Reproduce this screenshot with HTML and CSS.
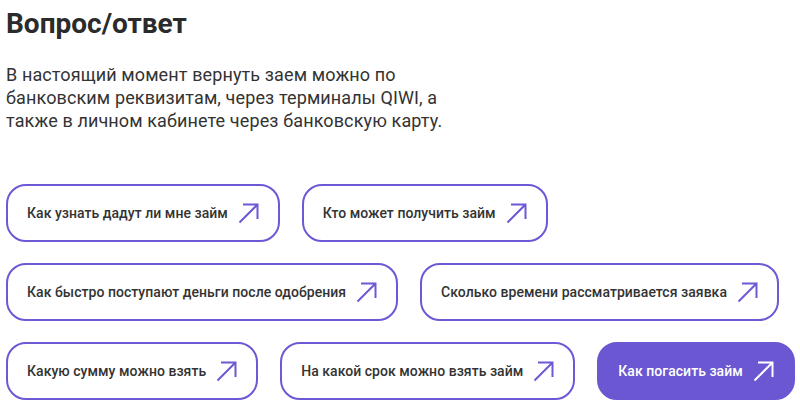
FILE: index.html
```html
<!DOCTYPE html>
<html lang="ru">
<head>
<meta charset="utf-8">
<title>Вопрос/ответ</title>
<link rel="stylesheet" href="styles.css">
</head>
<body>
<main class="faq">
  <h1 class="faq-title">Вопрос/ответ</h1>
  <p class="faq-answer">В настоящий момент вернуть заем можно по<br>банковским реквизитам, через терминалы QIWI, а<br>также в личном кабинете через банковскую карту.</p>
  <div class="faq-list">
    <a class="faq-btn" href="#">Как узнать дадут ли мне займ<svg class="arrow" viewBox="0 0 21 21"><path d="M1.5 19.5 L19.5 1.5 M5 1.5 H19.5 V16"/></svg></a>
    <a class="faq-btn" href="#">Кто может получить займ<svg class="arrow" viewBox="0 0 21 21"><path d="M1.5 19.5 L19.5 1.5 M5 1.5 H19.5 V16"/></svg></a>
    <a class="faq-btn" href="#">Как быстро поступают деньги после одобрения<svg class="arrow" viewBox="0 0 21 21"><path d="M1.5 19.5 L19.5 1.5 M5 1.5 H19.5 V16"/></svg></a>
    <a class="faq-btn" href="#">Сколько времени рассматривается заявка<svg class="arrow" viewBox="0 0 21 21"><path d="M1.5 19.5 L19.5 1.5 M5 1.5 H19.5 V16"/></svg></a>
    <a class="faq-btn" href="#">Какую сумму можно взять<svg class="arrow" viewBox="0 0 21 21"><path d="M1.5 19.5 L19.5 1.5 M5 1.5 H19.5 V16"/></svg></a>
    <a class="faq-btn" href="#">На какой срок можно взять займ<svg class="arrow" viewBox="0 0 21 21"><path d="M1.5 19.5 L19.5 1.5 M5 1.5 H19.5 V16"/></svg></a>
    <a class="faq-btn faq-btn--active" href="#">Как погасить займ<svg class="arrow" viewBox="0 0 21 21"><path d="M1.5 19.5 L19.5 1.5 M5 1.5 H19.5 V16"/></svg></a>
  </div>
</main>
</body>
</html>
```
FILE: styles.css
```css
html, body {
  margin: 0;
  padding: 0;
  background: #ffffff;
}

body {
  font-family: Roboto, "Liberation Sans", sans-serif;
  color: #333333;
}

.faq {
  padding: 7px 0 0 6px;
}

.faq-title {
  margin: 0;
  font-size: 28px;
  line-height: 33px;
  font-weight: 700;
  color: #2b2b2b;
}

.faq-answer {
  margin: 23px 0 0 0;
  font-size: 18px;
  line-height: 23px;
  font-weight: 400;
  letter-spacing: 0.12px;
  color: #333333;
}

.faq-list {
  margin-top: 52px;
  display: flex;
  flex-wrap: wrap;
  gap: 21px 22px;
}

.faq-btn {
  box-sizing: border-box;
  height: 58px;
  display: flex;
  align-items: center;
  gap: 10px;
  padding: 0 19px;
  border: 2px solid #6c59d6;
  border-radius: 20px;
  font-size: 14px;
  font-weight: 500;
  letter-spacing: 0.04px;
  color: #333333;
  text-decoration: none;
  white-space: nowrap;
  background: #ffffff;
}

.faq-btn .arrow {
  width: 21px;
  height: 21px;
  flex: none;
  fill: none;
  stroke: #6c59d6;
  stroke-width: 2;
}

.faq-btn--active {
  background: #6a57d1;
  border-color: #6a57d1;
  color: #ffffff;
}

.faq-btn--active .arrow {
  stroke: #ffffff;
}
```
